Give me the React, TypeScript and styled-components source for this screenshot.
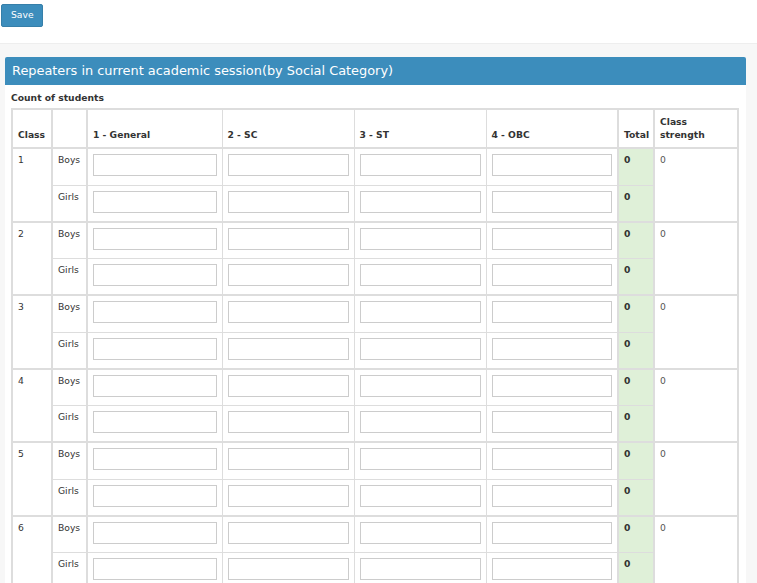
import React from "react";
import styled, { createGlobalStyle } from "styled-components";

const Global = createGlobalStyle`
  html, body { margin: 0; padding: 0; }
  body {
    background: #f7f7f7;
    font-family: "DejaVu Sans", Verdana, sans-serif;
    font-size: 9.2px;
    line-height: 1.42857;
    color: #333;
  }
  * { box-sizing: border-box; }
`;

const TopBar = styled.div`
  background: #fff;
  height: 44px;
  padding: 4px 0 0 1px;
  border-bottom: 1px solid #eeeeee;
`;

const SaveButton = styled.button`
  font-family: "DejaVu Sans", Verdana, sans-serif;
  font-size: 9.2px;
  line-height: 13px;
  color: #fff;
  background: #3c8dbc;
  border: 1px solid #367fa9;
  border-radius: 2px;
  padding: 3px 9px 5px;
  height: 23px;
  width: 42px;
  cursor: pointer;
`;

const Content = styled.div`
  padding: 13px 11px 0 5px;
`;

const Panel = styled.div`
  background: #fff;
  border-radius: 3px 3px 0 0;
`;

const PanelHeader = styled.div`
  background: #3c8dbc;
  color: #fff;
  font-size: 12.9px;
  height: 28px;
  line-height: 28px;
  padding: 0 7px;
  border-radius: 2px 2px 0 0;
`;

const PanelBody = styled.div`
  padding: 6px 7px 0 6px;
`;

const Caption = styled.div`
  font-weight: bold;
  line-height: 13px;
  margin-bottom: 4px;
`;

const Table = styled.table`
  width: 728px;
  table-layout: fixed;
  border-collapse: collapse;
  border: 2px solid #dddddd;
`;

const HeadCell = styled.th<{ $thick?: boolean }>`
  text-align: left;
  vertical-align: bottom;
  font-weight: bold;
  padding: 5px 5px 6px;
  height: 39px;
  border: 1px solid #dddddd;
  border-bottom: 2px solid #dddddd;
  border-left-width: ${(p) => (p.$thick ? "2px" : "1px")};
  line-height: 13px;
`;

const Cell = styled.td<{ $thickLeft?: boolean; $groupEnd?: boolean; $total?: boolean; $bold?: boolean }>`
  vertical-align: top;
  padding: 4px 5px 5px;
  height: ${(p) => (p.$groupEnd ? "36px" : "37px")};
  border: 1px solid #dddddd;
  border-left-width: ${(p) => (p.$thickLeft ? "2px" : "1px")};
  border-bottom-width: ${(p) => (p.$groupEnd ? "2px" : "1px")};
  background: ${(p) => (p.$total ? "#dff0d8" : "#fff")};
  font-weight: ${(p) => (p.$bold ? "bold" : "normal")};
  line-height: 13px;
`;

const Strength = styled(Cell)`
  color: #555;
`;

const NumInput = styled.input`
  display: block;
  width: 100%;
  height: 22px;
  border: 1px solid #cccccc;
  background: #fff;
  padding: 2px 4px;
  font-family: "DejaVu Sans", Verdana, sans-serif;
  font-size: 9.2px;
  margin: 1px 0 3px 0;
  outline: none;
`;

const cols = [40, 35, 135, 132, 132, 132, 36, 84];
const categories = ["1 - General", "2 - SC", "3 - ST", "4 - OBC"];
const classes = [1, 2, 3, 4, 5, 6, 7, 8];

export default function App() {
  return (
    <>
      <Global />
      <TopBar>
        <SaveButton>Save</SaveButton>
      </TopBar>
      <Content>
        <Panel>
          <PanelHeader>Repeaters in current academic session(by Social Category)</PanelHeader>
          <PanelBody>
            <Caption>Count of students</Caption>
            <Table>
              <colgroup>
                {cols.map((w, i) => (
                  <col key={i} style={{ width: w }} />
                ))}
              </colgroup>
              <thead>
                <tr>
                  <HeadCell>Class</HeadCell>
                  <HeadCell $thick></HeadCell>
                  <HeadCell $thick>{categories[0]}</HeadCell>
                  <HeadCell>{categories[1]}</HeadCell>
                  <HeadCell>{categories[2]}</HeadCell>
                  <HeadCell>{categories[3]}</HeadCell>
                  <HeadCell $thick>Total</HeadCell>
                  <HeadCell $thick>Class strength</HeadCell>
                </tr>
              </thead>
              <tbody>
                {classes.map((c) => (
                  <React.Fragment key={c}>
                    <tr>
                      <Cell rowSpan={2} $groupEnd>
                        {c}
                      </Cell>
                      <Cell $thickLeft>Boys</Cell>
                      {categories.map((cat, i) => (
                        <Cell key={cat} $thickLeft={i === 0}>
                          <NumInput type="text" />
                        </Cell>
                      ))}
                      <Cell $thickLeft $total $bold>
                        0
                      </Cell>
                      <Strength rowSpan={2} $thickLeft $groupEnd>
                        0
                      </Strength>
                    </tr>
                    <tr>
                      <Cell $thickLeft $groupEnd>
                        Girls
                      </Cell>
                      {categories.map((cat, i) => (
                        <Cell key={cat} $thickLeft={i === 0} $groupEnd>
                          <NumInput type="text" />
                        </Cell>
                      ))}
                      <Cell $thickLeft $total $bold $groupEnd>
                        0
                      </Cell>
                    </tr>
                  </React.Fragment>
                ))}
              </tbody>
            </Table>
          </PanelBody>
        </Panel>
      </Content>
    </>
  );
}
